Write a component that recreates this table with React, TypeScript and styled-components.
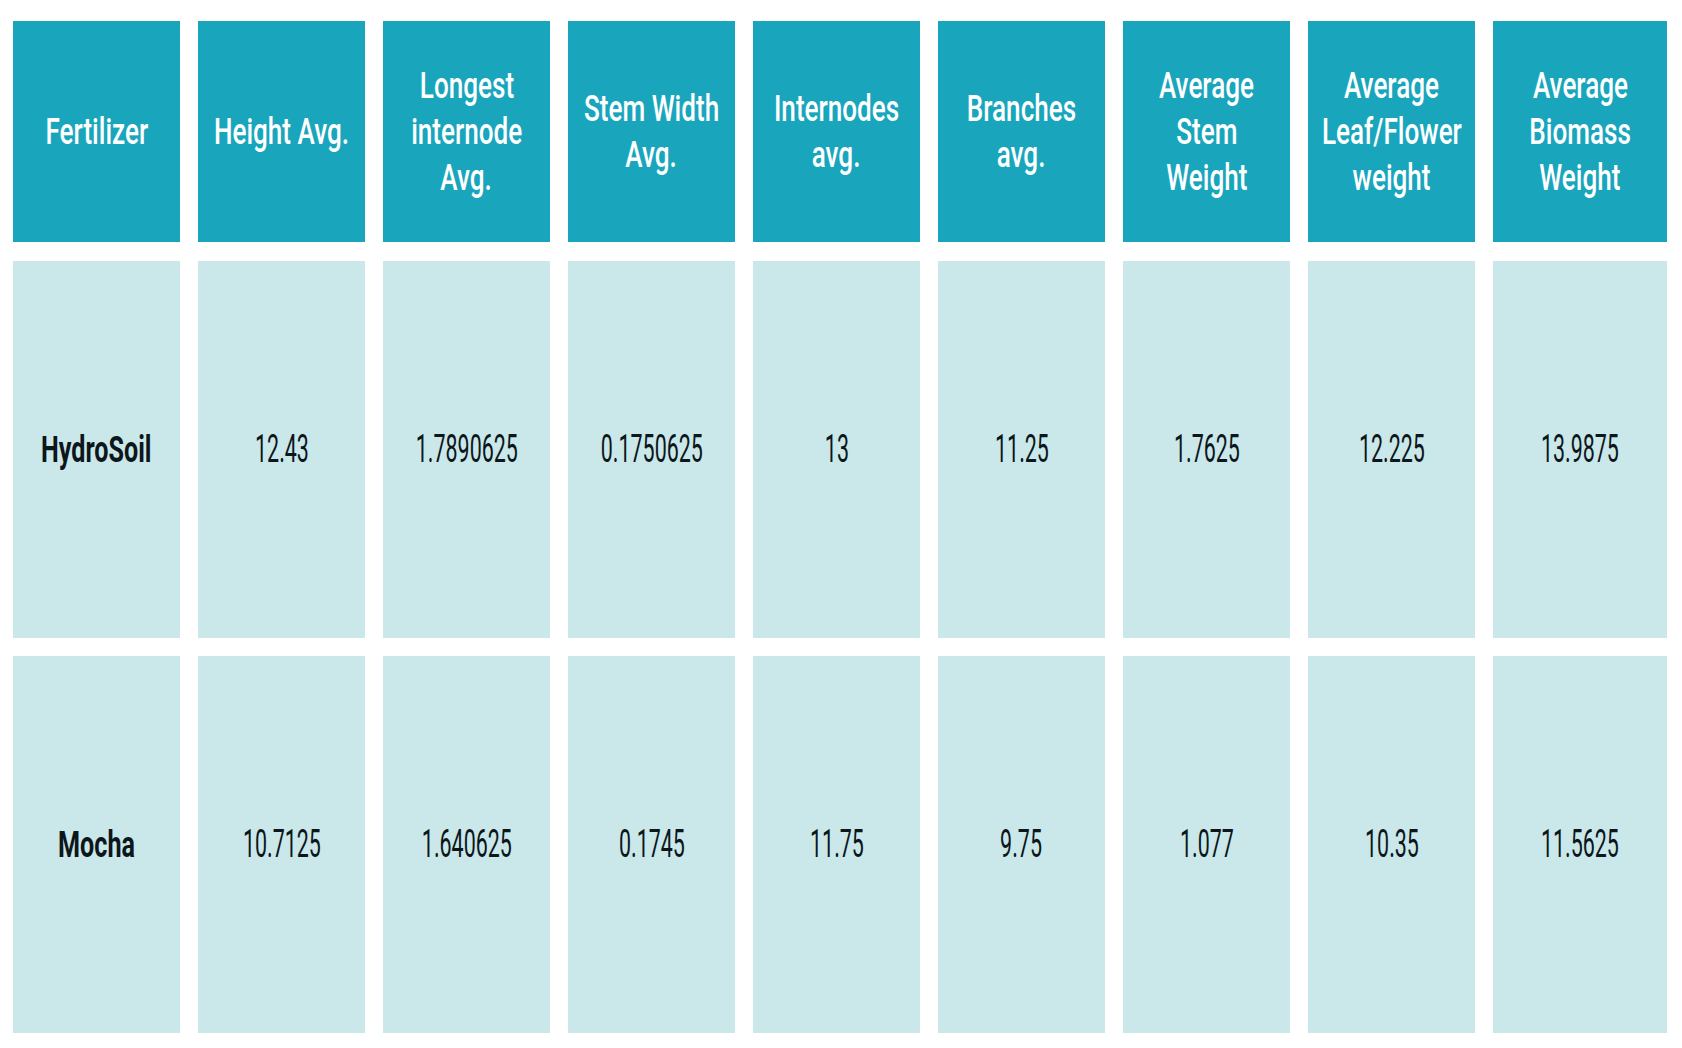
import React from "react";
import styled, { createGlobalStyle } from "styled-components";

const GlobalStyle = createGlobalStyle`
  html, body {
    margin: 0;
    padding: 0;
    background: #ffffff;
  }
  body {
    font-family: Roboto, "Liberation Sans", sans-serif;
  }
`;

const Page = styled.div`
  width: 1682px;
  height: 1048px;
  box-sizing: border-box;
  padding: 21px 0 0 13px;
  background: #ffffff;
`;

const Grid = styled.div`
  display: grid;
  grid-template-columns: repeat(8, 167px) 174px;
  grid-template-rows: 221px 377px 377px;
  column-gap: 18px;
  row-gap: 18.5px;
`;

const HeaderCell = styled.div`
  background: #19a6bd;
  display: flex;
  align-items: center;
  justify-content: center;
  overflow: hidden;
`;

const BodyCell = styled.div`
  background: #cae8ea;
  display: flex;
  align-items: center;
  justify-content: center;
  overflow: hidden;
`;

const HeaderText = styled.div`
  display: flex;
  flex-direction: column;
  align-items: center;
  color: #ffffff;
  font-family: Roboto, "Liberation Sans", sans-serif;
  font-weight: 500;
  font-size: 36.5px;
  line-height: 46px;
`;

const Line = styled.span<{ $scale: number }>`
  display: inline-block;
  white-space: nowrap;
  transform: scaleX(${(p) => p.$scale});
  transform-origin: center;
`;

const ValueText = styled.span<{ $bold?: boolean; $scale: number }>`
  display: inline-block;
  white-space: nowrap;
  color: #0c161b;
  font-family: Roboto, "Liberation Sans", sans-serif;
  font-weight: ${(p) => (p.$bold ? 700 : 400)};
  font-size: ${(p) => (p.$bold ? "37px" : "39px")};
  line-height: 1;
  transform: scaleX(${(p) => p.$scale});
  transform-origin: center;
`;

const headers: string[][] = [
  ["Fertilizer"],
  ["Height Avg."],
  ["Longest", "internode", "Avg."],
  ["Stem Width", "Avg."],
  ["Internodes", "avg."],
  ["Branches", "avg."],
  ["Average", "Stem", "Weight"],
  ["Average", "Leaf/Flower", "weight"],
  ["Average", "Biomass", "Weight"],
];

const rows: { name: string; values: string[] }[] = [
  {
    name: "HydroSoil",
    values: ["12.43", "1.7890625", "0.1750625", "13", "11.25", "1.7625", "12.225", "13.9875"],
  },
  {
    name: "Mocha",
    values: ["10.7125", "1.640625", "0.1745", "11.75", "9.75", "1.077", "10.35", "11.5625"],
  },
];

export default function App() {
  return (
    <>
      <GlobalStyle />
      <Page>
        <Grid>
          {headers.map((lines, i) => (
            <HeaderCell key={`h-${i}`}>
              <HeaderText>
                {lines.map((l, j) => (
                  <Line key={j} $scale={0.715}>
                    {l}
                  </Line>
                ))}
              </HeaderText>
            </HeaderCell>
          ))}
          {rows.map((r) => (
            <React.Fragment key={r.name}>
              <BodyCell>
                <ValueText $bold $scale={0.68}>
                  {r.name}
                </ValueText>
              </BodyCell>
              {r.values.map((v, k) => (
                <BodyCell key={`${r.name}-${k}`}>
                  <ValueText $scale={0.55}>{v}</ValueText>
                </BodyCell>
              ))}
            </React.Fragment>
          ))}
        </Grid>
      </Page>
    </>
  );
}
